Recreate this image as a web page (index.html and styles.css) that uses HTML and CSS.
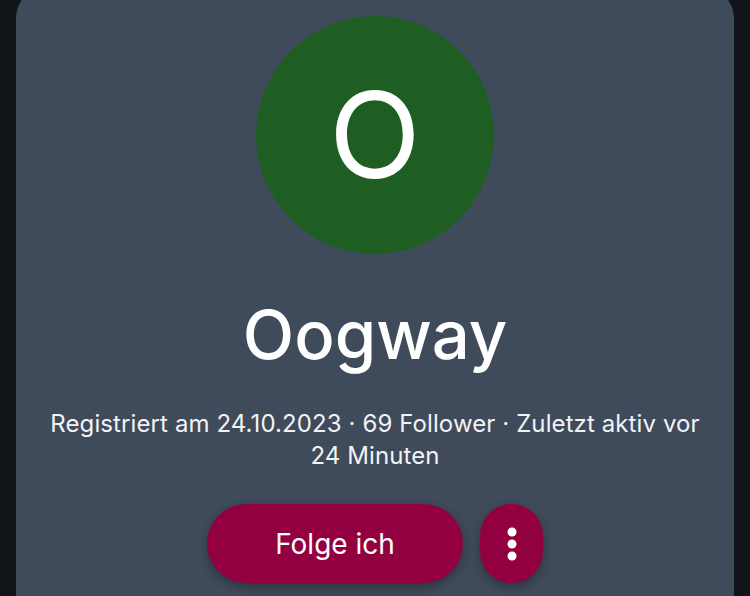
FILE: index.html
```html
<!DOCTYPE html>
<html lang="de">
<head>
    <meta charset="UTF-8">
    <meta name="viewport" content="width=device-width, initial-scale=1.0">
    <title>Oogway</title>
    <link rel="stylesheet" href="styles.css">
</head>
<body>
    <div class="profile-card">
        <div class="avatar">O</div>
        <h1 class="name">Oogway</h1>
        <p class="meta">Registriert am 24.10.2023 · 69 Follower · Zuletzt aktiv vor 24 Minuten</p>
        <div class="actions">
            <button class="follow-btn">Folge ich</button>
            <button class="more-btn" aria-label="Mehr">
                <svg width="12" height="34" viewBox="0 0 12 34">
                    <circle cx="6" cy="5" r="4.5" fill="#fff"/>
                    <circle cx="6" cy="17" r="4.5" fill="#fff"/>
                    <circle cx="6" cy="29" r="4.5" fill="#fff"/>
                </svg>
            </button>
        </div>
    </div>
</body>
</html>
```

FILE: styles.css
```css
body {
    margin: 0;
    background-color: #111419;
    color: #fff;
    font-family: Inter, "Noto Sans", sans-serif;
    overflow: hidden;
}

.profile-card {
    margin: -12px 16px 0;
    padding: 28px 28px 40px;
    background-color: #3f4a5a;
    border-radius: 30px;
    display: flex;
    flex-direction: column;
    align-items: center;
    text-align: center;
}

.avatar {
    width: 238px;
    height: 238px;
    border-radius: 50%;
    background-color: #1e5e22;
    display: flex;
    align-items: center;
    justify-content: center;
    font-size: 120px;
    line-height: 1;
}

.name {
    margin: 40px 0 0;
    font-size: 67px;
    font-weight: 500;
    line-height: 82px;
}

.meta {
    margin: 32px 0 0;
    font-size: 24px;
    letter-spacing: 0.1px;
    line-height: 32px;
    color: #f2f3f6;
}

.actions {
    display: flex;
    gap: 17px;
    margin-top: 32px;
}

.follow-btn {
    width: 256px;
    height: 79px;
    border: none;
    border-radius: 40px;
    background-color: #93003f;
    color: #fff;
    font-family: Inter, sans-serif;
    font-size: 28px;
    box-shadow: 0 4px 10px rgba(0, 0, 0, 0.3);
}

.more-btn {
    width: 63px;
    height: 79px;
    border: none;
    border-radius: 32px;
    background-color: #93003f;
    display: flex;
    align-items: center;
    justify-content: center;
    box-shadow: 0 4px 10px rgba(0, 0, 0, 0.3);
}
```
